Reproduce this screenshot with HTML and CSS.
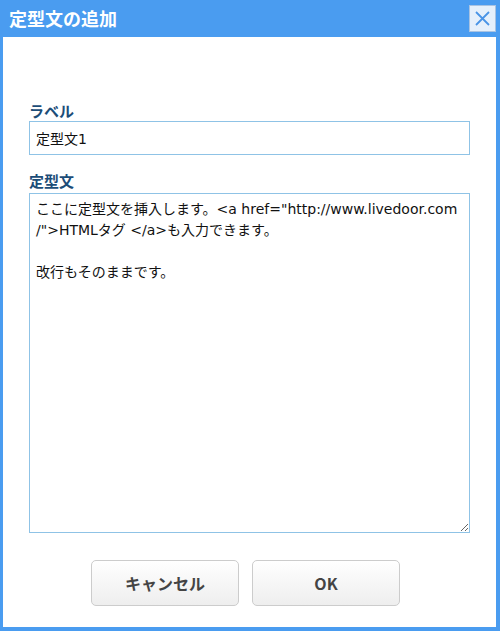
FILE: index.html
```html
<!DOCTYPE html>
<html lang="ja">
<head>
    <meta charset="UTF-8">
    <meta name="viewport" content="width=device-width, initial-scale=1.0">
    <title>定型文の追加</title>
    <link rel="stylesheet" href="styles.css">
</head>
<body>

<!-- Dialog -->
<div class="dialog">
    <!-- Title bar -->
    <div class="titlebar">
        <h1 class="title">定型文の追加</h1>
        <button class="close-btn" aria-label="閉じる">
            <svg width="17" height="17" viewBox="0 0 17 17">
                <path d="M2 2 L15 15 M15 2 L2 15" stroke="#4a94e6" stroke-width="1.8" fill="none"/>
            </svg>
        </button>
    </div>

    <!-- Form -->
    <div class="content">
        <label class="field-label" for="label-input">ラベル</label>
        <input id="label-input" class="text-input" type="text" value="定型文1">

        <label class="field-label second" for="body-input">定型文</label>
        <textarea id="body-input" class="text-area">ここに定型文を挿入します。&lt;a href="http://www.livedoor.com
/"&gt;HTMLタグ &lt;/a&gt;も入力できます。

改行もそのままです。</textarea>

        <div class="buttons">
            <button class="btn">キャンセル</button>
            <button class="btn">OK</button>
        </div>
    </div>
</div>

</body>
</html>
```

FILE: styles.css
```css
*{
    box-sizing: border-box;
}
body {
    margin: 0;
    padding: 0;
    background-color: #ffffff;
    font-family: "Liberation Sans", "Noto Sans CJK JP", sans-serif;
}

/* Dialog frame */
.dialog {
    width: 500px;
    height: 631px;
    display: flex;
    flex-direction: column;
    border-left: 3px solid #4a9cf0;
    border-right: 4px solid #4a9cf0;
    border-bottom: 4px solid #4a9cf0;
    background-color: #ffffff;
}

/* Title bar */
.titlebar {
    height: 37px;
    margin-left: -3px;
    margin-right: -4px;
    background-color: #4a9cf0;
    display: flex;
    align-items: center;
    justify-content: space-between;
    padding: 0 4px 0 9px;
}
.title {
    margin: 0;
    color: #ffffff;
    font-size: 18px;
    font-weight: bold;
    font-family: "Noto Sans CJK JP", sans-serif;
    margin-top: -1px;
}
.close-btn {
    width: 27px;
    height: 27px;
    margin-top: -1px;
    padding: 0;
    border: 1px solid #a9c3e2;
    background-color: #e6f0fb;
    display: flex;
    align-items: center;
    justify-content: center;
    cursor: pointer;
}

/* Form area */
.content {
    flex: 1;
    display: flex;
    flex-direction: column;
    padding: 65px 26px 0 26px;
}
.field-label {
    color: #1c4d78;
    font-size: 15px;
    font-weight: bold;
    font-family: "Noto Sans CJK JP", sans-serif;
    line-height: 18px;
    margin-bottom: 1px;
}
.field-label.second {
    margin-top: 17px;
    margin-bottom: 3px;
}
.text-input {
    height: 34px;
    width: 100%;
    border: 1px solid #8fc3e6;
    padding: 0 6px;
    font-size: 14px;
    font-family: "DejaVu Sans", "Noto Sans CJK JP", sans-serif;
    color: #111;
    outline: none;
}
.text-area {
    height: 340px;
    width: 100%;
    border: 1px solid #8fc3e6;
    padding: 5px 6px;
    font-size: 14px;
    line-height: 21px;
    font-family: "DejaVu Sans", "Noto Sans CJK JP", sans-serif;
    color: #111;
    resize: both;
    outline: none;
    white-space: pre-wrap;
}

/* Buttons */
.buttons {
    display: flex;
    justify-content: center;
    gap: 13px;
    margin-top: 27px;
    padding-right: 8px;
}
.btn {
    width: 148px;
    height: 46px;
    border: 1px solid #cccccc;
    border-radius: 5px;
    background: linear-gradient(#ffffff, #eeeeee);
    color: #444444;
    font-size: 16px;
    font-weight: bold;
    font-family: "Noto Sans CJK JP", sans-serif;
    cursor: pointer;
}
```
